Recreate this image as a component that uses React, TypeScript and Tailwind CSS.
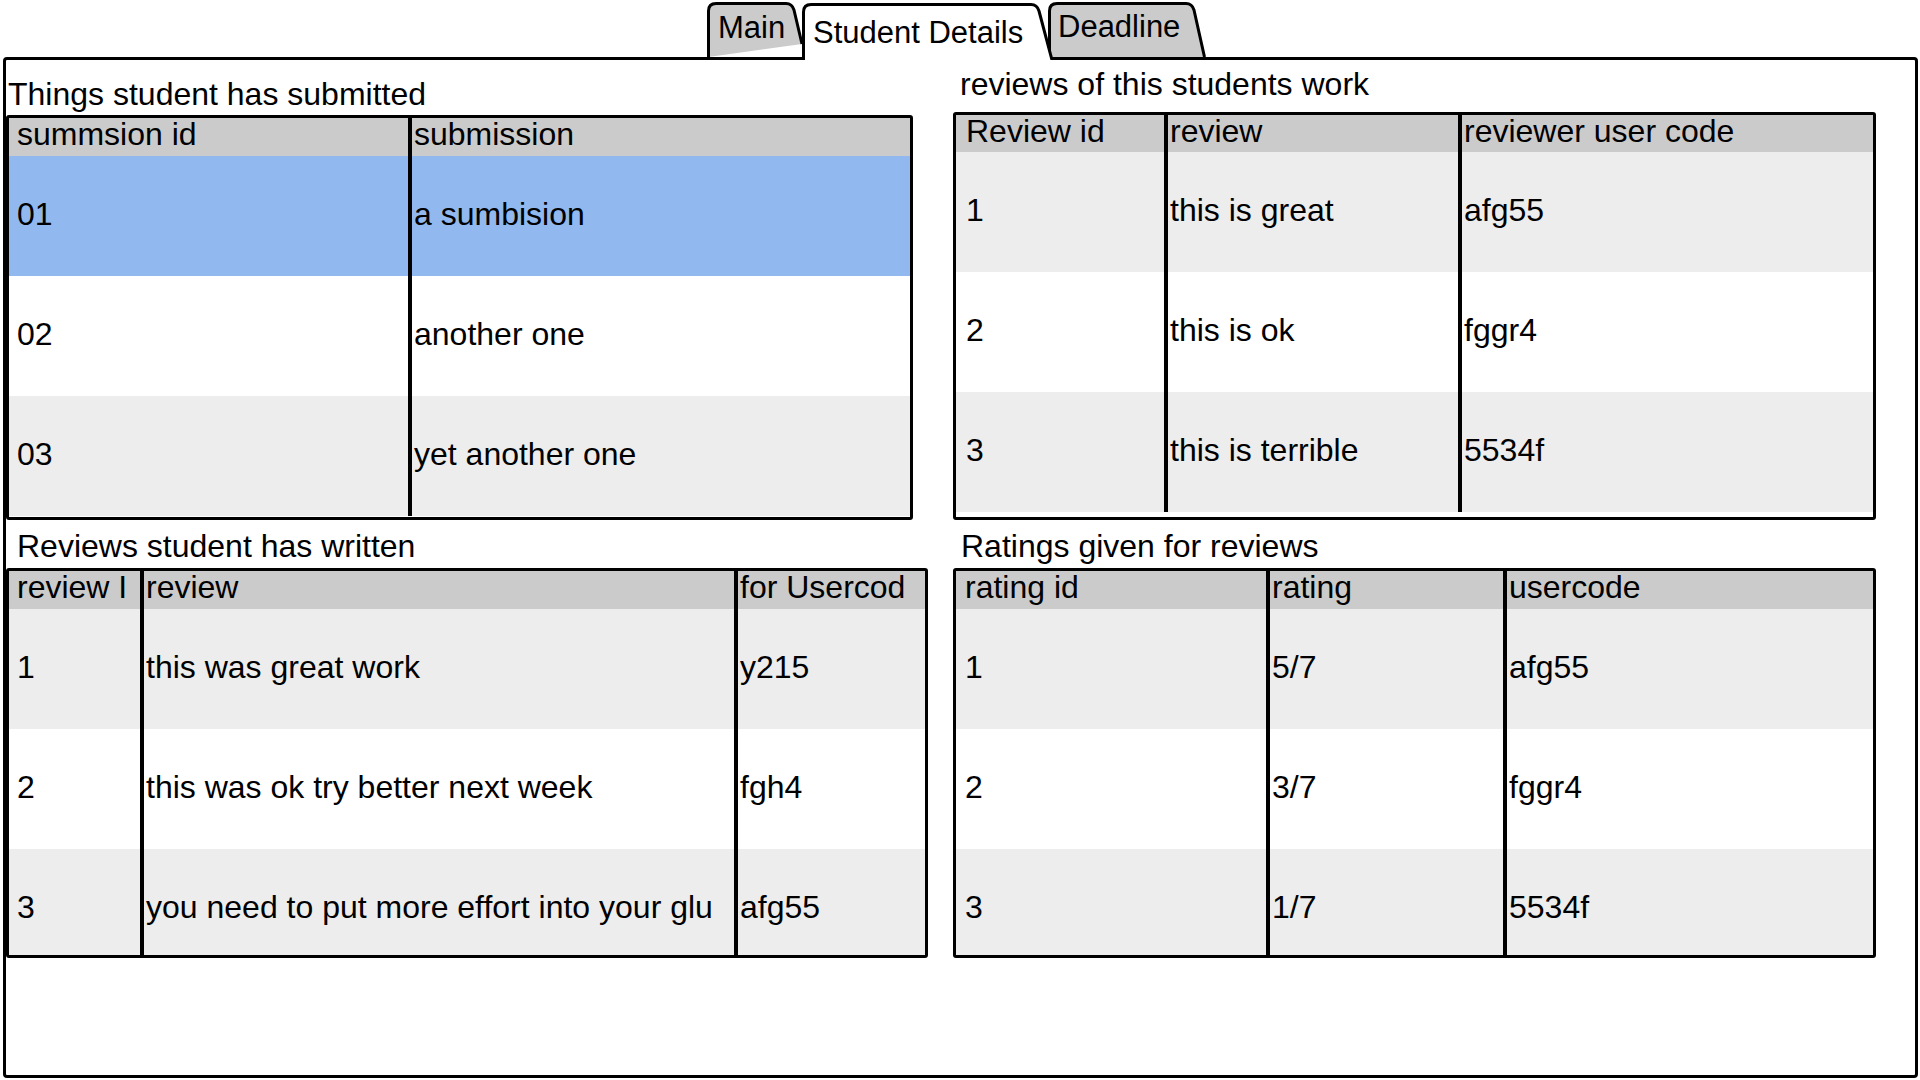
import React from "react";

type Row = { cells: string[]; bg: string };

function Table({
  w,
  h,
  cols,
  firstPad,
  headers,
  rows,
  headerH,
}: {
  w: string;
  h: string;
  cols: string;
  firstPad: string;
  headers: string[];
  rows: Row[];
  headerH: string;
}) {
  return (
    <div className={`${w} ${h} border-[3px] border-black rounded-[3px] overflow-hidden bg-white`}>
      <div className={`grid ${cols} ${headerH} bg-[#cbcbcb]`}>
        {headers.map((t, i) => (
          <div
            key={i}
            className={`h-full min-w-0 leading-[32px] whitespace-nowrap ${
              i === 0 ? firstPad : "border-l-[4px] border-black pl-[2px]"
            }`}
          >
            {t}
          </div>
        ))}
      </div>
      {rows.map((r, ri) => (
        <div key={ri} className={`grid ${cols} h-[120px] ${r.bg}`}>
          {r.cells.map((t, i) => (
            <div
              key={i}
              className={`h-full min-w-0 flex items-center pb-[4px] whitespace-nowrap ${
                i === 0 ? firstPad : "border-l-[4px] border-black pl-[2px]"
              }`}
            >
              {t}
            </div>
          ))}
        </div>
      ))}
    </div>
  );
}

const GRAY = "bg-[#ededed]";
const WHITE = "bg-white";
const BLUE = "bg-[#92b9ef]";

export default function App() {
  return (
    <div className="w-[1920px] h-[1080px] bg-white overflow-hidden text-black font-['Liberation_Sans',Arial,sans-serif]">
      {/* Tabs */}
      <div className="flex h-[57px] items-end pl-[707px] text-[31px] leading-[31px]">
        <div className="relative w-[95px] h-[55px] shrink-0">
          <svg className="absolute inset-0" width="95" height="55" viewBox="0 0 95 55">
            <path
              d="M1.5 55 V9 Q1.5 1.5 9 1.5 H79 Q85 1.5 87 8 L95 42"
              fill="#cbcbcb"
              stroke="#000"
              strokeWidth="3"
              strokeLinejoin="round"
            />
          </svg>
          <span className="relative block pl-[11px] pt-[10px]">Main</span>
        </div>
        <div className="relative z-20 w-[251px] h-[58px] -mb-[3px] shrink-0">
          <svg className="absolute inset-0" width="251" height="58" viewBox="0 0 251 58">
            <path
              d="M1.5 58 V10 Q1.5 2.5 9 2.5 H229 Q235 2.5 237 9 L250 58"
              fill="#fff"
              stroke="#000"
              strokeWidth="3"
              strokeLinejoin="round"
            />
          </svg>
          <span className="relative block pl-[11px] pt-[15px]">Student Details</span>
        </div>
        <div className="relative z-10 w-[158px] h-[55px] -ml-[5px] shrink-0">
          <svg className="absolute inset-0" width="158" height="55" viewBox="0 0 158 55">
            <path
              d="M1.5 55 V9 Q1.5 1.5 9 1.5 H138 Q144 1.5 146 8 L156.5 55"
              fill="#cbcbcb"
              stroke="#000"
              strokeWidth="3"
              strokeLinejoin="round"
            />
          </svg>
          <span className="relative block pl-[10px] pt-[9px]">Deadline</span>
        </div>
      </div>

      {/* Frame */}
      <div className="ml-[3px] w-[1915px] h-[1021px] border-[3px] border-black rounded-[4px] text-[32px]">
        <div className="flex flex-col">
          <div className="flex h-[460px]">
            <div className="w-[922px] flex flex-col pt-[16px]">
              <div className="h-[36px] leading-[36px] pl-[2px] whitespace-nowrap">Things student has submitted</div>
              <div className="mt-[3px]">
                <Table
                  w="w-[907px]"
                  h="h-[405px]"
                  cols="grid-cols-[399px_1fr]"
                  firstPad="pl-[8px]"
                  headerH="h-[38px]"
                  headers={["summsion id", "submission"]}
                  rows={[
                    { cells: ["01", "a sumbision"], bg: BLUE },
                    { cells: ["02", "another one"], bg: WHITE },
                    { cells: ["03", "yet another one"], bg: GRAY },
                  ]}
                />
              </div>
            </div>
            <div className="ml-[25px] w-[923px] flex flex-col pt-[6px]">
              <div className="h-[36px] leading-[36px] pl-[7px] whitespace-nowrap">reviews of this students work</div>
              <div className="mt-[10px]">
                <Table
                  w="w-[923px]"
                  h="h-[408px]"
                  cols="grid-cols-[208px_294px_1fr]"
                  firstPad="pl-[10px]"
                  headerH="h-[37px]"
                  headers={["Review id", "review", "reviewer user code"]}
                  rows={[
                    { cells: ["1", "this is great", "afg55"], bg: GRAY },
                    { cells: ["2", "this is ok", "fggr4"], bg: WHITE },
                    { cells: ["3", "this is terrible", "5534f"], bg: GRAY },
                  ]}
                />
              </div>
            </div>
          </div>

          <div className="flex pt-[8px]">
            <div className="w-[922px] flex flex-col">
              <div className="h-[36px] leading-[36px] pl-[11px] whitespace-nowrap">Reviews student has written</div>
              <div className="mt-[4px]">
                <Table
                  w="w-[922px]"
                  h="h-[390px]"
                  cols="grid-cols-[131px_594px_1fr]"
                  firstPad="pl-[8px]"
                  headerH="h-[38px]"
                  headers={["review I", "review", "for Usercod"]}
                  rows={[
                    { cells: ["1", "this was great work", "y215"], bg: GRAY },
                    { cells: ["2", "this was ok try better next week", "fgh4"], bg: WHITE },
                    { cells: ["3", "you need to put more effort into your glu", "afg55"], bg: GRAY },
                  ]}
                />
              </div>
            </div>
            <div className="ml-[25px] w-[923px] flex flex-col">
              <div className="h-[36px] leading-[36px] pl-[8px] whitespace-nowrap">Ratings given for reviews</div>
              <div className="mt-[4px]">
                <Table
                  w="w-[923px]"
                  h="h-[390px]"
                  cols="grid-cols-[310px_237px_1fr]"
                  firstPad="pl-[9px]"
                  headerH="h-[38px]"
                  headers={["rating id", "rating", "usercode"]}
                  rows={[
                    { cells: ["1", "5/7", "afg55"], bg: GRAY },
                    { cells: ["2", "3/7", "fggr4"], bg: WHITE },
                    { cells: ["3", "1/7", "5534f"], bg: GRAY },
                  ]}
                />
              </div>
            </div>
          </div>
        </div>
      </div>
    </div>
  );
}
